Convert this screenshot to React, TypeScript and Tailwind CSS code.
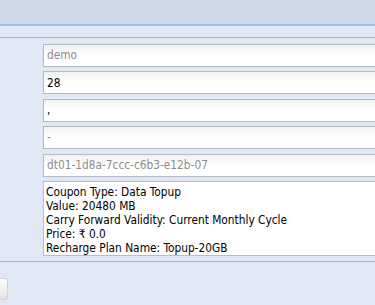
const inputs = [
  { value: 'demo', muted: true },
  { value: '28', muted: false },
  { value: ',', muted: false },
  { value: '-', muted: true },
  { value: 'dt01-1d8a-7ccc-c6b3-e12b-07', muted: true },
];

const details = [
  'Coupon Type: Data Topup',
  'Value: 20480 MB',
  'Carry Forward Validity: Current Monthly Cycle',
  'Price: ₹ 0.0',
  'Recharge Plan Name: Topup-20GB',
];

export default function App() {
  return (
    <div
      className="h-[305px] w-[375px] overflow-hidden bg-[#dfe8f4]"
      style={{ fontFamily: 'Tahoma, "DejaVu Sans Condensed", "DejaVu Sans", sans-serif' }}
    >
      {/* header */}
      <div className="h-[24px] bg-[#cdd9e5]" />
      <div className="h-[2px] bg-[#9dbde6]" />
      <div className="h-[12px] border-b border-[#b1b6c4]" />

      {/* form */}
      <div className="flex flex-col gap-[4.4px] pl-[43px] pt-[6px]">
        {inputs.map((f, i) => (
          <div
            key={i}
            className="flex h-[23px] w-[340px] items-center border border-[#b4b9c8] bg-gradient-to-b from-[#f0f0f0] via-white to-white pl-[3px] pt-[1px] text-[11.8px]"
          >
            <span className={f.muted ? 'text-[#8c8c8c]' : 'text-black'}>{f.value}</span>
          </div>
        ))}
        <div className="h-[75px] w-[340px] border border-[#a3c0e6] bg-white px-[2px] pt-[4px] text-[11.8px] leading-[13.9px] text-black">
          {details.map((d) => (
            <div key={d}>{d}</div>
          ))}
        </div>
      </div>

      <div className="mt-[5px] border-b border-[#b1b6c4]" />

      <div className="pt-[16px]">
        <div className="h-[22px] w-[8px] rounded-r-[3px] border border-l-0 border-[#cfd3da] bg-gradient-to-b from-white to-[#e2e2e2]" />
      </div>
    </div>
  );
}
